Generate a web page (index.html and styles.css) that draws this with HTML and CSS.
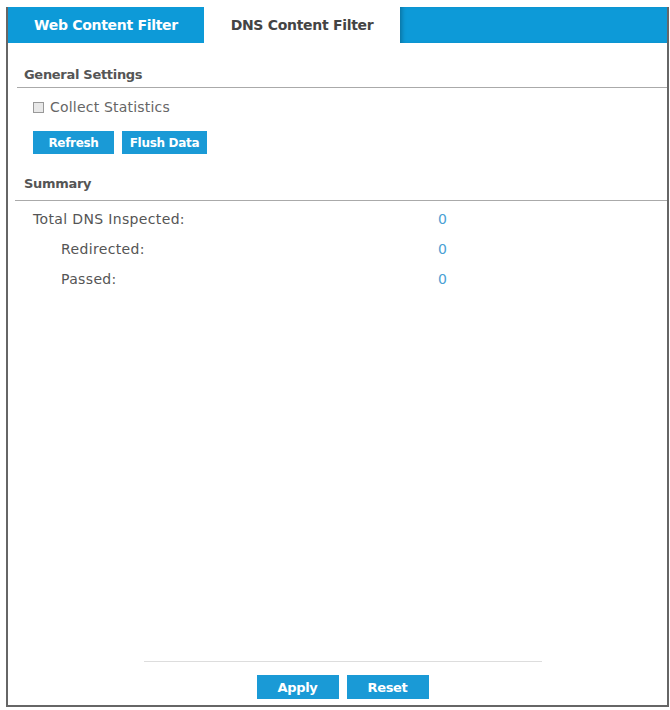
FILE: index.html
```html
<!DOCTYPE html>
<html lang="en">

<head>
    <meta charset="UTF-8">
    <meta name="viewport" content="width=device-width, initial-scale=1.0">
    <title>DNS Content Filter</title>
    <link rel="stylesheet" href="styles.css">
</head>

<body>
    <div class="panel">
        <!-- tab strip -->
        <div class="tabs">
            <div class="tab">Web Content Filter</div>
            <div class="tab active">DNS Content Filter</div>
            <div class="tab-rest"></div>
        </div>

        <div class="content">
            <div class="section">
                <div class="section-title">General Settings</div>
                <div class="section-body">
                    <label class="check">
                        <span class="box"></span>
                        Collect Statistics
                    </label>
                    <div class="btns">
                        <button class="btn">Refresh</button>
                        <button class="btn">Flush Data</button>
                    </div>
                </div>
            </div>

            <div class="section summary">
                <div class="section-title">Summary</div>
                <div class="stats">
                    <div class="stat">
                        <span class="label">Total DNS Inspected:</span>
                        <span class="value">0</span>
                    </div>
                    <div class="stat sub">
                        <span class="label">Redirected:</span>
                        <span class="value">0</span>
                    </div>
                    <div class="stat sub">
                        <span class="label">Passed:</span>
                        <span class="value">0</span>
                    </div>
                </div>
            </div>
        </div>

        <!-- apply / reset -->
        <div class="footer">
            <div class="footer-line"></div>
            <div class="footer-btns">
                <button class="btn big">Apply</button>
                <button class="btn big">Reset</button>
            </div>
        </div>
    </div>
</body>

</html>
```

FILE: styles.css
```css
* {
    margin: 0;
    padding: 0;
    box-sizing: border-box;
}

body {
    background: #fff;
    font-family: "DejaVu Sans", "Lato", sans-serif;
    color: #555;
}

.panel {
    margin: 7px 0 0 6px;
    width: 663px;
    height: 700px;
    border: 2px solid #666;
    border-top: none;
    display: flex;
    flex-direction: column;
}

/* tabs */
.tabs {
    display: flex;
    height: 36px;
    background: #0d9ad8;
}
.tab {
    width: 196px;
    display: flex;
    align-items: center;
    justify-content: center;
    font-size: 14px;
    font-weight: bold;
    color: #fff;
    letter-spacing: -0.3px;
}
.tab.active {
    background: #fff;
    color: #444;
}
.tab-rest {
    flex: 1;
    box-shadow: inset 4px 0 4px -2px rgba(0, 0, 0, 0.25);
}

.content {
    padding: 25px 0 0 9px;
}

.section-title {
    font-size: 13px;
    font-weight: bold;
    color: #555;
    line-height: 14px;
    padding: 0 0 5px 7px;
    border-bottom: 1px solid #aaa;
    letter-spacing: -0.3px;
}

.section-body {
    padding: 12px 0 0 16px;
}

.check {
    display: flex;
    align-items: center;
    gap: 6px;
    font-size: 14px;
    line-height: 14px;
    color: #666;
    letter-spacing: 0.2px;
}
.box {
    width: 11px;
    height: 11px;
    border: 1px solid #999;
    background: #e8e8e8;
}

.btns {
    display: flex;
    gap: 8px;
    margin-top: 17px;
}
.btn {
    border: none;
    background: #1a9ad6;
    color: #fff;
    font-family: inherit;
    font-weight: bold;
    font-size: 12px;
    height: 23px;
    padding: 0;
    white-space: nowrap;
    letter-spacing: -0.3px;
}
.btns .btn:first-child {
    width: 81px;
}
.btns .btn:last-child {
    width: 85px;
}

.summary {
    margin-top: 23px;
}
.summary .section-title {
    margin-left: -2px;
    padding-left: 9px;
    padding-bottom: 9px;
}

.stats {
    padding-top: 3px;
}
.stat {
    display: flex;
    height: 30px;
    align-items: center;
    font-size: 14px;
    letter-spacing: 0.35px;
    color: #555;
    padding-left: 16px;
}
.stat .label {
    width: 405px;
}
.stat.sub .label {
    padding-left: 28px;
}
.stat .value {
    color: #4aa0d4;
}

/* bottom bar */
.footer {
    margin-top: auto;
    display: flex;
    flex-direction: column;
    align-items: center;
    padding: 0 0 6px 10px;
}
.footer-line {
    width: 398px;
    border-top: 1px solid #ddd;
}
.footer-btns {
    display: flex;
    gap: 8px;
    margin-top: 13px;
}
.btn.big {
    width: 82px;
    height: 24px;
    font-size: 13px;
}
```
